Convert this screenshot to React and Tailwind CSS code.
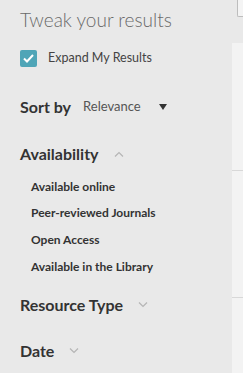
import React from 'react';

function Chevron({ up }) {
  return (
    <svg width="10" height="6" viewBox="0 0 10 6" className="ml-[15px]" fill="none" stroke="#b5b5b5" strokeWidth="1.2">
      {up ? <path d="M1 5.5 L5 1.5 L9 5.5" /> : <path d="M1 0.5 L5 4.5 L9 0.5" />}
    </svg>
  );
}

function App() {
  const items = ['Available online', 'Peer-reviewed Journals', 'Open Access', 'Available in the Library'];

  return (
    <div className="flex h-[373px] w-[243px] overflow-hidden bg-[#e9e9e9]" style={{ fontFamily: 'Lato, "Open Sans", sans-serif' }}>
      <aside className="w-[232px] shrink-0 pl-[20px]">
        <h2 className="mt-[8px] text-[19px] font-light leading-[24px] text-[#6a6a6a]">Tweak your results</h2>

        <label className="mt-[17px] flex items-center">
          <span className="flex h-[17px] w-[17px] items-center justify-center rounded-[2px] bg-[#4fa5b7]">
            <svg width="11" height="9" viewBox="0 0 11 9" fill="none" stroke="white" strokeWidth="2">
              <path d="M1 4.5 L4 7.5 L10 1" />
            </svg>
          </span>
          <span className="ml-[11px] text-[12.5px] text-[#444]">Expand My Results</span>
        </label>

        <div className="mt-[27px] flex items-center">
          <span className="text-[16px] font-bold text-[#333]">Sort by</span>
          <span className="ml-[12px] text-[13px] text-[#555]">Relevance</span>
          <svg width="8" height="6" viewBox="0 0 8 6" className="ml-[18px]">
            <path d="M0 0 L8 0 L4 6 Z" fill="#333" />
          </svg>
        </div>

        <div className="mt-[23px] flex items-center">
          <span className="text-[16px] font-bold text-[#333]">Availability</span>
          <Chevron up />
        </div>

        <ul className="mt-[8px] pl-[11px]">
          {items.map((t) => (
            <li key={t} className="h-[26.7px] text-[12px] font-bold leading-[26.7px] text-[#333]">{t}</li>
          ))}
        </ul>

        <div className="mt-[12px] flex items-center">
          <span className="text-[16px] font-bold text-[#333]">Resource Type</span>
          <Chevron />
        </div>

        <div className="mt-[22px] flex items-center">
          <span className="text-[16px] font-bold text-[#333]">Date</span>
          <Chevron />
        </div>
      </aside>

      <div className="flex flex-1 flex-col">
        <div className="h-[43px] pl-[5px]">
          <div className="h-[17px] rounded-bl-[2px] border-b border-l border-[#bdbdbd] bg-[#f4f4f4]" />
        </div>
        <div className="flex-1 bg-[#f3f3f3]">
          <div className="h-[128px] border-b border-[#d8d8d8]" />
          <div className="h-[127px] border-b border-[#d8d8d8]" />
        </div>
      </div>
    </div>
  );
}

export default App;
